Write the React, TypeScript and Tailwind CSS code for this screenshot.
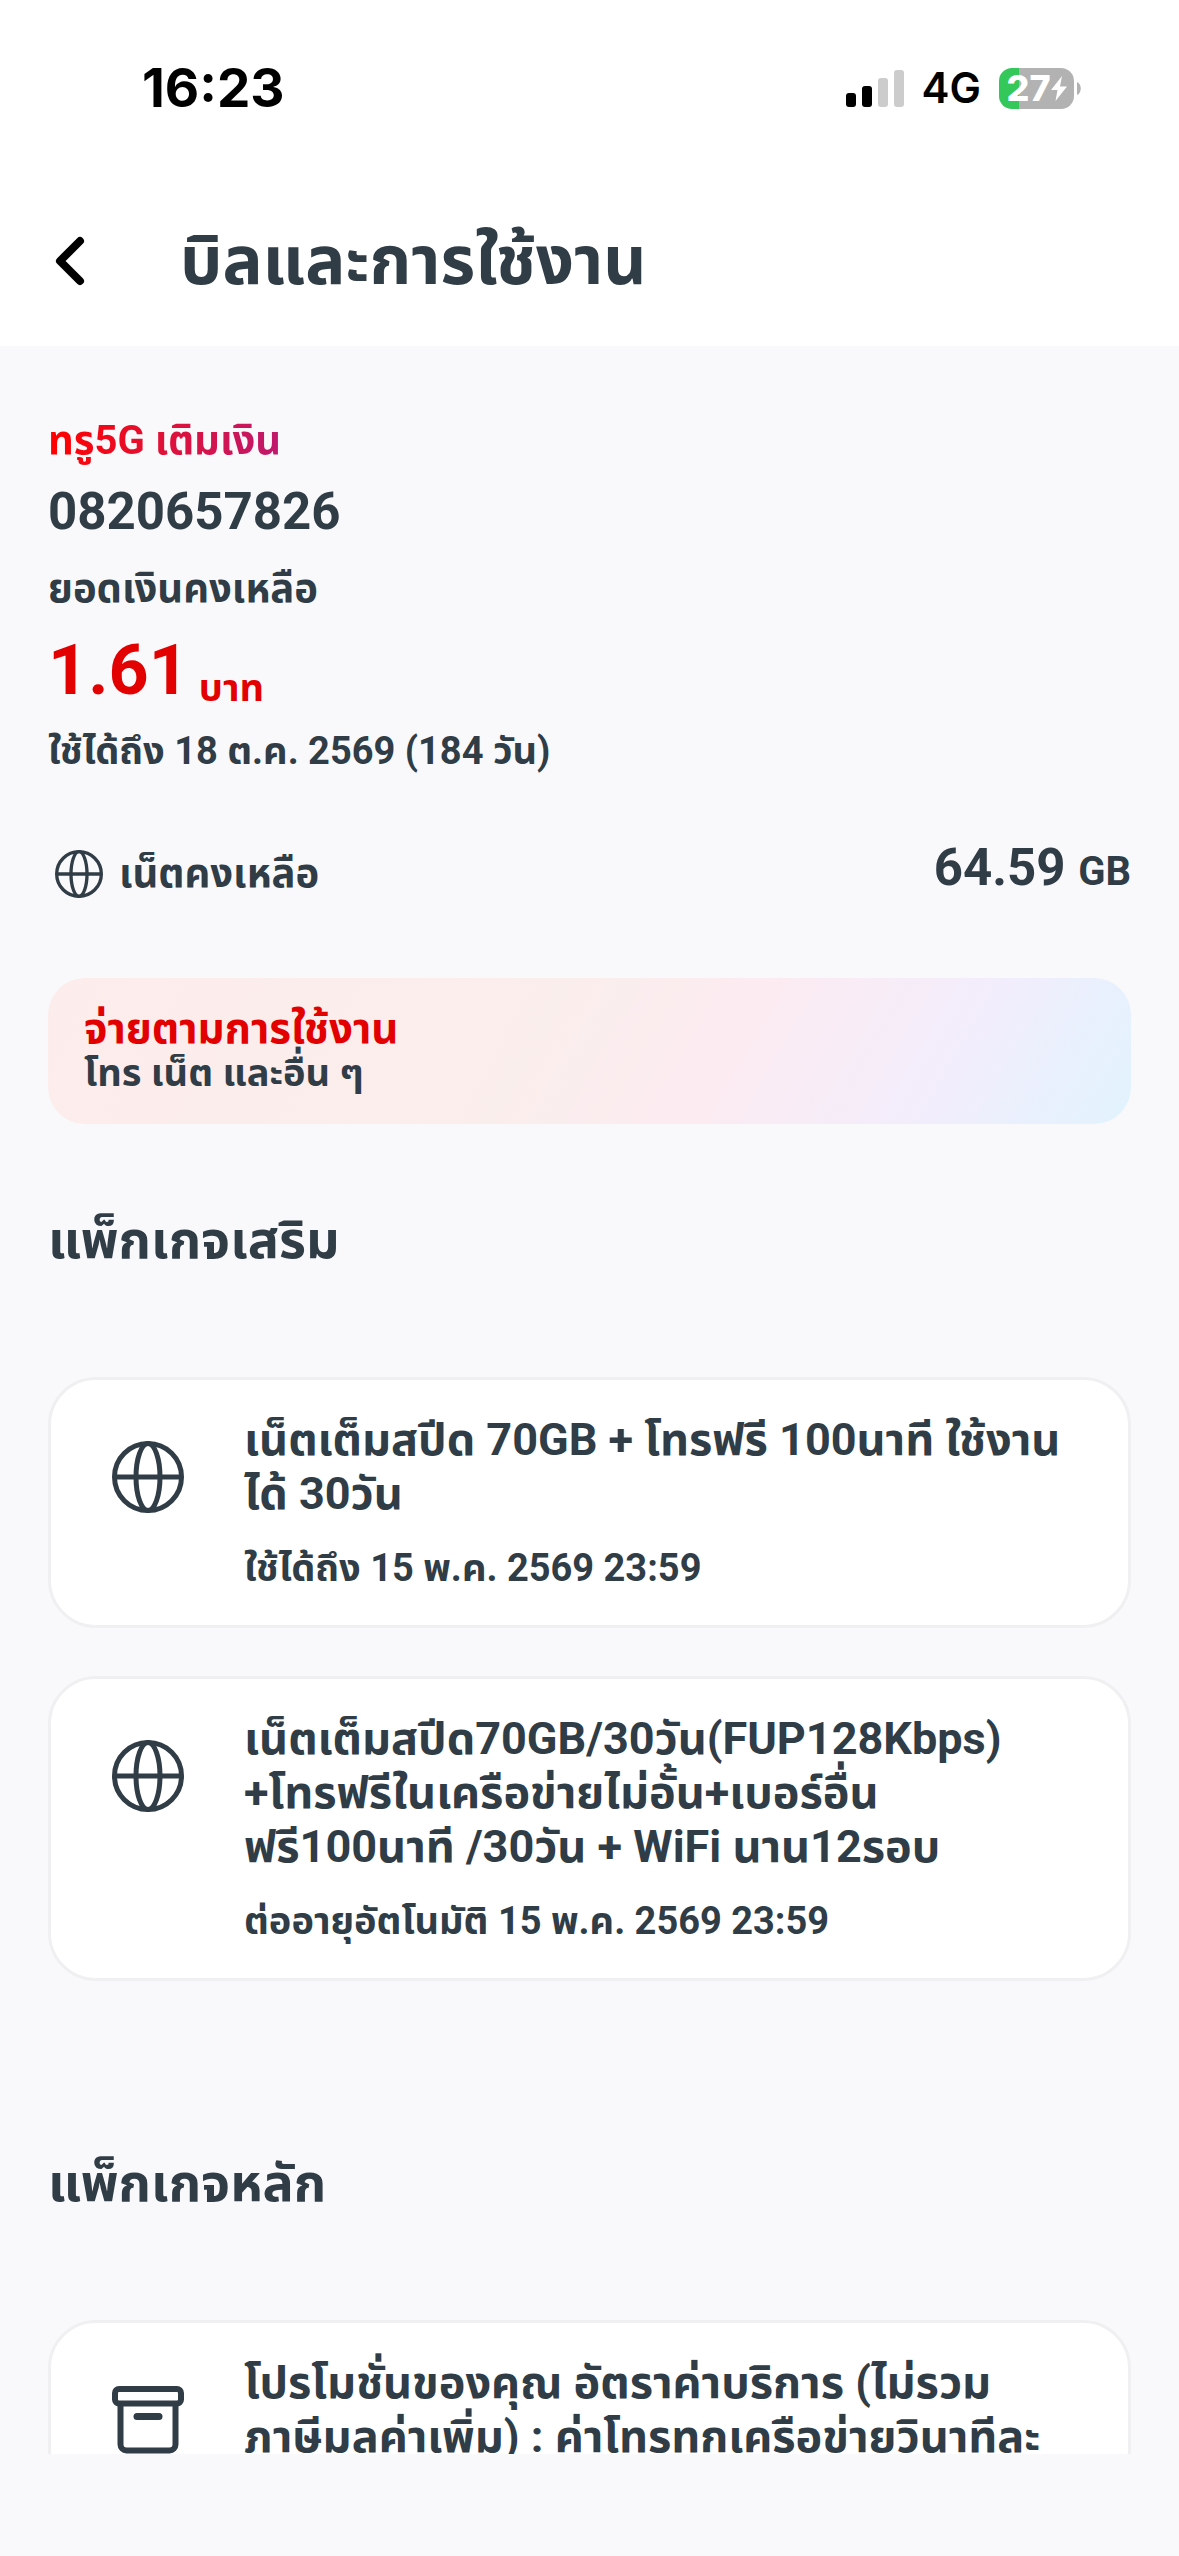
import { ReactNode } from 'react'

interface Package {
    id: string
    icon: ReactNode
    title: string[]
    note?: string
}

const GlobeIcon = ({ className, strokeWidth }: { className: string; strokeWidth: number }) => (
    <svg viewBox="0 0 72 72" fill="none" stroke="currentColor" strokeWidth={strokeWidth} className={className} aria-hidden="true">
        <circle cx="36" cy="36" r="33.5" />
        <ellipse cx="36" cy="36" rx="12" ry="33.5" />
        <path d="M2 36h68" />
    </svg>
)

const BoxIcon = () => (
    <svg viewBox="0 0 72 72" fill="none" stroke="currentColor" strokeWidth="6" strokeLinejoin="round" className="size-[72px]" aria-hidden="true">
        <rect x="3" y="5" width="66" height="14.5" rx="4" />
        <path d="M8.500 20v40.500a6 6 0 0 0 6 6h43a6 6 0 0 0 6-6V20" />
        <path d="M25 32.500h22" strokeLinecap="round" strokeWidth="7" />
    </svg>
)

const addOns: Package[] = [
    {
        id: 'full-speed-70',
        icon: <GlobeIcon className="size-[72px]" strokeWidth={5} />,
        title: ['เน็ตเต็มสปีด 70GB + โทรฟรี 100นาที ใช้งาน', 'ได้ 30วัน'],
        note: 'ใช้ได้ถึง 15 พ.ค. 2569 23:59'
    },
    {
        id: 'full-speed-70-renew',
        icon: <GlobeIcon className="size-[72px]" strokeWidth={5} />,
        title: [
            'เน็ตเต็มสปีด70GB/30วัน(FUP128Kbps)',
            '+โทรฟรีในเครือข่ายไม่อั้น+เบอร์อื่น',
            'ฟรี100นาที /30วัน + WiFi นาน12รอบ'
        ],
        note: 'ต่ออายุอัตโนมัติ 15 พ.ค. 2569 23:59'
    }
]

const mainPackages: Package[] = [
    {
        id: 'main-promotion',
        icon: <BoxIcon />,
        title: ['โปรโมชั่นของคุณ อัตราค่าบริการ (ไม่รวม', 'ภาษีมูลค่าเพิ่ม) : ค่าโทรทุกเครือข่ายวินาทีละ']
    }
]

function StatusBar() {
    return (
        <div className="flex items-center justify-between pt-[56px] pr-[98px] pl-[142px] font-['Inter',sans-serif] text-black">
            <span className="text-[53px] leading-[64px] font-bold">16:23</span>
            <div className="flex items-center">
                <svg viewBox="0 0 58 37" className="h-[37px] w-[58px]" aria-hidden="true">
                    <rect x="0" y="23" width="10" height="14" rx="3" />
                    <rect x="16" y="16" width="10" height="21" rx="3" />
                    <rect x="32" y="8" width="10" height="29" rx="3" fill="#cccccc" />
                    <rect x="48" y="0" width="10" height="37" rx="3" fill="#cccccc" />
                </svg>
                <span className="ml-[18px] text-[42px] leading-[64px] font-semibold">4G</span>
                <div className="ml-[18px] flex items-center gap-[3px]">
                    <div className="flex h-[41px] w-[75px] items-center justify-center rounded-[13px] bg-linear-to-r from-[#34c759] from-27% to-[#b2b2b2] to-27% text-white">
                        <span className="text-[36px] leading-[41px] font-extrabold">27</span>
                        <svg viewBox="0 0 16 25" className="h-[25px] w-[16px]" fill="currentColor" aria-hidden="true">
                            <path d="M11 0 0 14h6.500L4.500 25 16 10.500H9z" />
                        </svg>
                    </div>
                    <svg viewBox="0 0 4 13" className="h-[13px] w-[4px]" aria-hidden="true">
                        <path d="M0 0c5 2 5 11 0 13z" fill="#b2b2b2" />
                    </svg>
                </div>
            </div>
        </div>
    )
}

function PackageCard({ icon, title, note }: Package) {
    return (
        <article className="flex items-start gap-[60px] rounded-[48px] border-3 border-[#f0f0f2] bg-white pt-[33px] pr-6 pb-[30px] pl-[61px]">
            <div className="mt-[28px] shrink-0">{icon}</div>
            <div>
                <h3 className="text-[45px] leading-[54px] font-bold whitespace-nowrap">
                    {title.map(line => (
                        <span key={line} className="block">{line}</span>
                    ))}
                </h3>
                {note && <p className="mt-[20px] text-[38px] leading-[54px] font-bold">{note}</p>}
            </div>
        </article>
    )
}

export default function App() {
    return (
        <div className="flex h-screen flex-col bg-[#f9f9fb] font-['Roboto','Noto_Sans_Thai','Noto_Sans',sans-serif] text-[#303c46]">
            <header className="bg-white pb-[40px]">
                <StatusBar />
                <div className="mt-[96px] flex items-center gap-[92px] pl-[52px]">
                    <button type="button" aria-label="ย้อนกลับ" className="text-black">
                        <svg viewBox="0 0 36 56" className="h-[56px] w-[36px]" fill="none" stroke="currentColor" strokeWidth="8" strokeLinecap="round" strokeLinejoin="round" aria-hidden="true">
                            <path d="M28 8 8 28l20 20" />
                        </svg>
                    </button>
                    <h1 className="text-[67px] leading-[90px] font-bold">บิลและการใช้งาน</h1>
                </div>
            </header>

            <main className="min-h-0 flex-1 overflow-y-auto px-12 pt-[68px] [scrollbar-width:none]">
                <section>
                    <p className="w-fit bg-linear-[100deg,#ff0000_5%,#e60f2d_40%,#be1970_100%] bg-clip-text text-[40px] leading-[54px] font-bold text-transparent">
                        ทรู5G เติมเงิน
                    </p>
                    <p className="mt-[14px] text-[51px] leading-[60px] font-bold">0820657826</p>
                    <p className="mt-[20px] text-[40px] leading-[54px] font-bold">ยอดเงินคงเหลือ</p>
                    <p className="flex items-end gap-[10px] text-[#e30000]">
                        <span className="text-[70px] leading-[108px] font-bold">1.61</span>
                        <span className="text-[38px] leading-[72px] font-bold">บาท</span>
                    </p>
                    <p className="text-[38px] leading-[54px] font-bold">ใช้ได้ถึง 18 ต.ค. 2569 (184 วัน)</p>
                </section>

                <div className="mt-[60px] flex h-[72px] items-center">
                    <GlobeIcon className="ml-[7px] size-[48px]" strokeWidth={5} />
                    <span className="ml-[16px] text-[40px] leading-[60px] font-bold">เน็ตคงเหลือ</span>
                    <span className="ml-auto self-start text-[51px] leading-[60px] font-bold">
                        64.59 <span className="text-[40px]">GB</span>
                    </span>
                </div>

                <a href="#pay-as-you-go" className="mt-[68px] block rounded-[37px] bg-linear-[120deg,#fdecec_0%,#faeeec_45%,#fcebf1_62%,#f2edfc_82%,#e1f3fe_100%] px-[36px] py-[28px] leading-[45px] font-bold">
                    <span className="block text-[42px] text-[#e30000]">จ่ายตามการใช้งาน</span>
                    <span className="block text-[38px]">โทร เน็ต และอื่น ๆ</span>
                </a>

                <section className="mt-[81px]">
                    <h2 className="text-[52px] leading-[72px] font-bold">แพ็กเกจเสริม</h2>
                    <div className="mt-[100px] flex flex-col gap-[48px]">
                        {addOns.map(item => (
                            <PackageCard key={item.id} {...item} />
                        ))}
                    </div>
                </section>

                <section className="mt-[167px]">
                    <h2 className="text-[52px] leading-[72px] font-bold">แพ็กเกจหลัก</h2>
                    <div className="mt-[100px] flex flex-col gap-[48px]">
                        {mainPackages.map(item => (
                            <PackageCard key={item.id} {...item} />
                        ))}
                    </div>
                </section>
            </main>

            {/* Home indicator area */}
            <footer className="h-[102px] shrink-0 bg-[#f9f9fb]" />
        </div>
    )
}
